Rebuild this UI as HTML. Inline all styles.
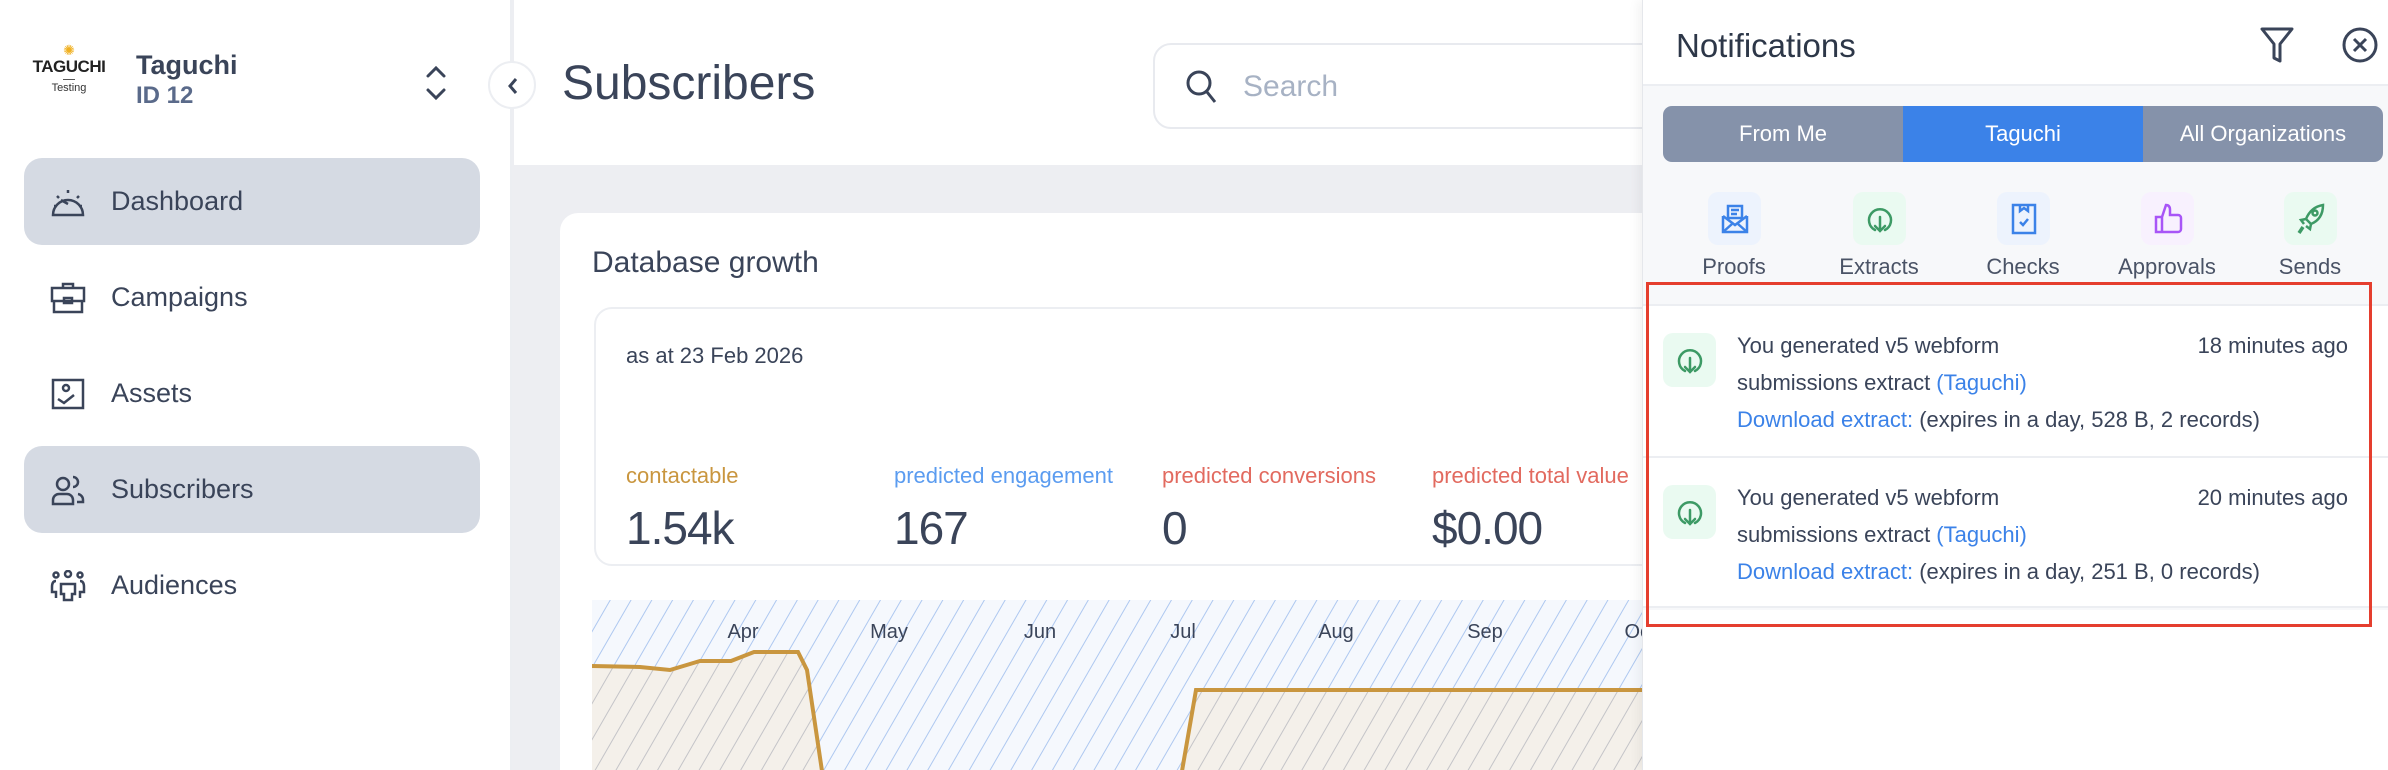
<!DOCTYPE html>
<html style="width:2388px;height:770px;overflow:hidden"><head><meta charset="utf-8"><style>
*{box-sizing:border-box;margin:0;padding:0}
body{width:2388px;height:770px;overflow:hidden;background:#edeef2;font-family:"Liberation Sans",sans-serif;color:#3a4459;position:relative}
.abs{position:absolute}
.side{left:0;top:0;width:512px;height:770px;background:#fff;border-right:2px solid #eceef2}
.nav{position:absolute;left:24px;width:456px;height:87px;border-radius:18px;display:flex;align-items:center;font-size:27px;color:#3a4459}
.nav.act{background:#d5dae3}
.nav svg{position:absolute;left:26px}
.nav span{position:absolute;left:87px}
.hdr{left:514px;top:0;width:1130px;height:165px;background:#fff}
.card{left:560px;top:213px;width:1100px;height:557px;background:#fff;border-radius:18px 18px 0 0;overflow:hidden}
.lbl{font-size:22px}
.val{font-size:46px;color:#3a4459;letter-spacing:-1px}
.panel{left:1642px;top:0;width:746px;height:770px;background:#f7f8fa;border-left:1px solid #e5e7eb;box-shadow:-4px 0 10px rgba(0,0,0,.05)}
.tab{position:absolute;top:106px;height:56px;width:240px;color:#fff;font-size:22px;display:flex;align-items:center;justify-content:center}
.cat{position:absolute;top:192px;width:53px;height:53px;border-radius:10px;display:flex;align-items:center;justify-content:center}
.catl{position:absolute;top:254px;width:140px;text-align:center;font-size:22px;color:#4a5366}
.item{position:absolute;left:0;width:746px;height:152px;background:#fff;border-top:2px solid #eceef2}
.item .ic{position:absolute;left:20px;top:27px;width:53px;height:54px;border-radius:10px;background:#eafaf1;display:flex;align-items:center;justify-content:center}
.item .t{position:absolute;left:94px;font-size:22px;color:#3a4459;line-height:37px;top:21px}
.blue{color:#3b82e8}
</style></head><body>

<div class="abs side">
  <div class="abs" style="left:26px;top:44px;width:86px;text-align:center">
    <div style="color:#f0b020;font-size:14px;line-height:13px">✺</div>
    <div style="font-size:17px;font-weight:bold;color:#222;letter-spacing:-0.5px">TAGUCHI</div>
    <div style="width:12px;height:1px;background:#555;margin:2px auto"></div>
    <div style="font-size:11px;color:#333">Testing</div>
  </div>
  <div class="abs" style="left:136px;top:50px;font-size:27px;color:#3a4459;font-weight:bold">Taguchi</div>
  <div class="abs" style="left:136px;top:82px;font-size:24px;color:#5a6a8a;font-weight:bold">ID 12</div>
  <svg class="abs" style="left:424px;top:62px" width="24" height="44" viewBox="0 0 24 44" fill="none" stroke="#3a4459" stroke-width="3" stroke-linecap="round"><path d="M4 14l8-8 8 8M4 28l8 8 8-8"/></svg>

  <div class="nav act" style="top:158px"><svg width="36" height="30" viewBox="0 0 36 30" fill="none" stroke="#3a4459" stroke-width="2.5"><path d="M3 28a15 15 0 1 1 30 0z"/><path d="M11 13l7 4M18 3v3M7 9l2 2M29 9l-2 2M4 19h3M32 19h-3"/></svg><span>Dashboard</span></div>
  <div class="nav" style="top:254px"><svg width="36" height="32" viewBox="0 0 36 32" fill="none" stroke="#3a4459" stroke-width="2.5"><rect x="2" y="6" width="32" height="13"/><path d="M4 19v11h28V19M13 6V2h10v4"/><rect x="14" y="16" width="8" height="5"/></svg><span>Campaigns</span></div>
  <div class="nav" style="top:350px"><svg width="36" height="32" viewBox="0 0 36 32" fill="none" stroke="#3a4459" stroke-width="2.5"><rect x="3" y="2" width="30" height="28"/><circle cx="16" cy="10" r="3"/><path d="M8 21l6 4 10-8"/></svg><span>Assets</span></div>
  <div class="nav act" style="top:446px"><svg width="36" height="32" viewBox="0 0 36 32" fill="none" stroke="#3a4459" stroke-width="2.5"><circle cx="13" cy="10" r="6"/><path d="M3 30v-4a6 6 0 0 1 6-6h8a6 6 0 0 1 6 6v4z"/><path d="M23 3a5 5 0 0 1 0 10M28 20a6 6 0 0 1 5 6v2h-6"/></svg><span>Subscribers</span></div>
  <div class="nav" style="top:542px"><svg width="36" height="32" viewBox="0 0 36 32" fill="none" stroke="#3a4459" stroke-width="2.5"><circle cx="18" cy="4" r="3"/><circle cx="6" cy="5" r="2.5"/><circle cx="30" cy="5" r="2.5"/><path d="M11 14h14v10h-3v6h-8v-6h-3zM6 11q-4 0-4 6v5h4v6M30 11q4 0 4 6v5h-4v6"/></svg><span>Audiences</span></div>
</div>

<div class="abs hdr">
  <div class="abs" style="left:48px;top:56px;font-size:48px;color:#3a4459">Subscribers</div>
  <div class="abs" style="left:639px;top:43px;width:600px;height:86px;border:2px solid #e8eaef;border-radius:18px">
    <svg class="abs" style="left:30px;top:24px" width="34" height="36" viewBox="0 0 34 36" fill="none" stroke="#3a4459" stroke-width="3"><circle cx="14" cy="14" r="11"/><path d="M22 23l8 10"/></svg>
    <div class="abs" style="left:88px;top:25px;font-size:30px;color:#a7b2c4">Search</div>
  </div>
</div>
<div class="abs" style="left:488px;top:61px;width:48px;height:48px;border-radius:50%;background:#fff;border:2px solid #eceef2"><svg class="abs" style="left:15px;top:13px" width="16" height="20" viewBox="0 0 16 20" fill="none" stroke="#3a4459" stroke-width="3"><path d="M11 3l-6 7 6 7"/></svg></div>

<div class="abs card">
  <div class="abs" style="left:32px;top:33px;font-size:30px;color:#3a4459">Database growth</div>
  <div class="abs" style="left:34px;top:94px;width:1200px;height:259px;border:2px solid #eceef2;border-radius:18px">
    <div class="abs" style="left:30px;top:34px;font-size:22px;color:#3a4459">as at 23 Feb 2026</div>
    <div class="abs lbl" style="left:30px;top:154px;color:#c9963f">contactable</div>
    <div class="abs val" style="left:30px;top:192px">1.54k</div>
    <div class="abs lbl" style="left:298px;top:154px;color:#5b9cf0">predicted engagement</div>
    <div class="abs val" style="left:298px;top:192px">167</div>
    <div class="abs lbl" style="left:566px;top:154px;color:#e26a5f">predicted conversions</div>
    <div class="abs val" style="left:566px;top:192px">0</div>
    <div class="abs lbl" style="left:836px;top:154px;color:#e26a5f">predicted total value</div>
    <div class="abs val" style="left:836px;top:192px">$0.00</div>
  </div>
</div>
<svg class="abs" style="left:592px;top:600px" width="1050" height="170" viewBox="592 600 1050 170">
  <defs><pattern id="h" width="18" height="18" patternUnits="userSpaceOnUse" patternTransform="rotate(30)"><rect width="18" height="18" fill="#f5f8fd"/><line x1="0" y1="0" x2="0" y2="18" stroke="#aec8f0" stroke-width="2"/></pattern>
  <pattern id="h2" width="18" height="18" patternUnits="userSpaceOnUse" patternTransform="rotate(30)"><rect width="18" height="18" fill="#f4f0ea"/><line x1="0" y1="0" x2="0" y2="18" stroke="#c4c4c8" stroke-width="2"/></pattern></defs>
  <rect x="592" y="600" width="1050" height="170" fill="url(#h)"/>
  <path d="M592 666L640 667L670 670L700 661L731 661L754 652L798 652L807 670L822 771L1182 771L1196 690L1642 690L1642 771L592 771Z" fill="url(#h2)"/>
  <path d="M592 666L640 667L670 670L700 661L731 661L754 652L798 652L807 670L822 771M1182 771L1196 690L1642 690" fill="none" stroke="#c9963f" stroke-width="4"/>
  <g font-family="Liberation Sans" font-size="20" fill="#3a4459" text-anchor="middle"><text x="743" y="638">Apr</text><text x="889" y="638">May</text><text x="1040" y="638">Jun</text><text x="1183" y="638">Jul</text><text x="1336" y="638">Aug</text><text x="1485" y="638">Sep</text><text x="1640" y="638">Oct</text></g>
</svg>

<div class="abs panel">
  <div class="abs" style="left:0;top:0;width:746px;height:86px;background:#fff;border-bottom:2px solid #eceef2"></div>
  <div class="abs" style="left:33px;top:27px;font-size:33px;color:#2d3748">Notifications</div>
  <svg class="abs" style="left:616px;top:26px" width="36" height="38" viewBox="0 0 36 38" fill="none" stroke="#3a4459" stroke-width="3" stroke-linejoin="round"><path d="M3 3h30L21 18v17l-6-3V18z"/></svg>
  <svg class="abs" style="left:698px;top:26px" width="38" height="38" viewBox="0 0 38 38" fill="none" stroke="#3a4459" stroke-width="3"><circle cx="19" cy="19" r="16"/><path d="M13 13l12 12M25 13L13 25"/></svg>
  <div class="tab" style="left:20px;background:#8592aa;border-radius:9px 0 0 9px">From Me</div>
  <div class="tab" style="left:260px;background:#3b82e8">Taguchi</div>
  <div class="tab" style="left:500px;background:#8592aa;border-radius:0 9px 9px 0">All Organizations</div>

  <div class="cat" style="left:65px;background:#edf3fd"><svg width="28" height="30" viewBox="0 0 28 30" fill="none" stroke="#3b82e8" stroke-width="2.5"><path d="M2 12v16h24V12M2 12l12 9 12-9"/><rect x="7" y="2" width="14" height="12"/><path d="M10 6h8M10 10h6M2 28l9-8M26 28l-9-8"/></svg></div>
  <div class="catl" style="left:21px">Proofs</div>
  <div class="cat" style="left:210px;background:#eafaf1"><svg width="30" height="30" viewBox="0 0 30 30" fill="none" stroke="#3d9a65" stroke-width="2.5" stroke-linecap="round"><path d="M10 26a11 11 0 1 1 10 0"/><path d="M15 13v14M10 22l5 5 5-5"/></svg></div>
  <div class="catl" style="left:166px">Extracts</div>
  <div class="cat" style="left:354px;background:#edf3fd"><svg width="28" height="34" viewBox="0 0 28 34" fill="none" stroke="#3b82e8" stroke-width="2.5"><rect x="3" y="3" width="22" height="28"/><path d="M10 3v6l4-3 4 3V3M10 20l3 3 5-6"/></svg></div>
  <div class="catl" style="left:310px">Checks</div>
  <div class="cat" style="left:498px;background:#f8f1fe"><svg width="30" height="32" viewBox="0 0 30 32" fill="none" stroke="#a855f7" stroke-width="2.5"><path d="M3 14h6v15H3zM9 14l4-12q4 0 4 5v5h8a3 3 0 0 1 3 3v11a3 3 0 0 1-3 3H9"/></svg></div>
  <div class="catl" style="left:454px">Approvals</div>
  <div class="cat" style="left:641px;background:#eafaf1"><svg width="30" height="32" viewBox="0 0 30 32" fill="none" stroke="#3d9a65" stroke-width="2.5"><path d="M27 2q-12 2-17 14l5 5q12-5 12-19zM10 16l-5 1 3 4M15 21l-1 5-4-3"/><circle cx="19" cy="10" r="2.5"/><path d="M7 24l-4 6" stroke-width="3.5"/></svg></div>
  <div class="catl" style="left:597px">Sends</div>

  <div class="item" style="top:304px">
    <div class="ic"><svg width="30" height="30" viewBox="0 0 30 30" fill="none" stroke="#3d9a65" stroke-width="2.5" stroke-linecap="round"><path d="M10 26a11 11 0 1 1 10 0"/><path d="M15 13v14M10 22l5 5 5-5"/></svg></div>
    <div class="t">You generated v5 webform<br>submissions extract <span class="blue">(Taguchi)</span><br><span class="blue">Download extract:</span> (expires in a day, 528 B, 2 records)</div>
    <div class="abs" style="right:41px;top:21px;font-size:22px;line-height:37px;color:#3a4459">18 minutes ago</div>
  </div>
  <div class="item" style="top:456px;border-bottom:2px solid #eceef2">
    <div class="ic"><svg width="30" height="30" viewBox="0 0 30 30" fill="none" stroke="#3d9a65" stroke-width="2.5" stroke-linecap="round"><path d="M10 26a11 11 0 1 1 10 0"/><path d="M15 13v14M10 22l5 5 5-5"/></svg></div>
    <div class="t">You generated v5 webform<br>submissions extract <span class="blue">(Taguchi)</span><br><span class="blue">Download extract:</span> (expires in a day, 251 B, 0 records)</div>
    <div class="abs" style="right:41px;top:21px;font-size:22px;line-height:37px;color:#3a4459">20 minutes ago</div>
  </div>
  <div class="abs" style="left:0;top:610px;width:746px;height:160px;background:#fff"></div>
  <div class="abs" style="left:3px;top:282px;width:726px;height:345px;border:3px solid #e53e2e"></div>
</div>
</body></html>
